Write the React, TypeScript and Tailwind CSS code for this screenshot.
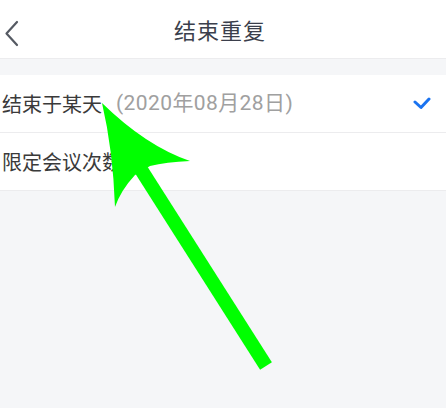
const font = { fontFamily: '"Noto Sans CJK SC", "Noto Sans", sans-serif' }

function Arrow() {
  return (
    <svg className="absolute inset-0 pointer-events-none" width="446" height="408" viewBox="0 0 446 408">
      <path
        d="M102,103 Q146,146 190,161 Q166,162 150,166 L135,175 Q121,190 115,207 Q113,150 102,103 Z"
        fill="#00ff00"
      />
      <line x1="140" y1="168" x2="266" y2="366" stroke="#00ff00" strokeWidth="14" />
    </svg>
  )
}

export default function App() {
  return (
    <div className="relative w-[446px] h-[408px] bg-[#f5f6f8] overflow-hidden" style={font}>
      <header className="relative h-[59px] bg-white border-b border-[#ececee] flex items-center justify-center">
        {/* back */}
        <svg className="absolute left-0 top-0" width="30" height="59" viewBox="0 0 30 59">
          <path d="M17,22 L6.5,33.5 L17,45" fill="none" stroke="#555a63" strokeWidth="2.2" strokeLinecap="round" strokeLinejoin="round" />
        </svg>
        <h1 className="text-[22px] text-[#3b3f4c] tracking-[1px] ml-[-6px]">结束重复</h1>
      </header>

      <div className="mt-4 bg-white">
        <div className="h-[58px] flex items-center border-b border-[#ececee] pl-[2px] pr-[14px]">
          <span className="text-[20px] text-[#3a3a3a]">结束于某天</span>
          <span
            className="ml-[14px] text-[21px] tracking-[0.4px] text-[#a0a0a0]"
            style={{ fontFamily: 'Roboto, "Noto Sans CJK SC", sans-serif' }}
          >
            (2020年08月28日)
          </span>
          <svg className="ml-auto" width="20" height="14" viewBox="0 0 20 14">
            <path d="M3,5 L9,10.5 L17,2" fill="none" stroke="#1a73f0" strokeWidth="3" strokeLinecap="round" strokeLinejoin="round" />
          </svg>
        </div>
        <div className="h-[58px] flex items-center border-b border-[#ececee] pl-[2px]">
          <span className="text-[20px] text-[#3a3a3a]">限定会议次数</span>
        </div>
      </div>

      <Arrow />
    </div>
  )
}
